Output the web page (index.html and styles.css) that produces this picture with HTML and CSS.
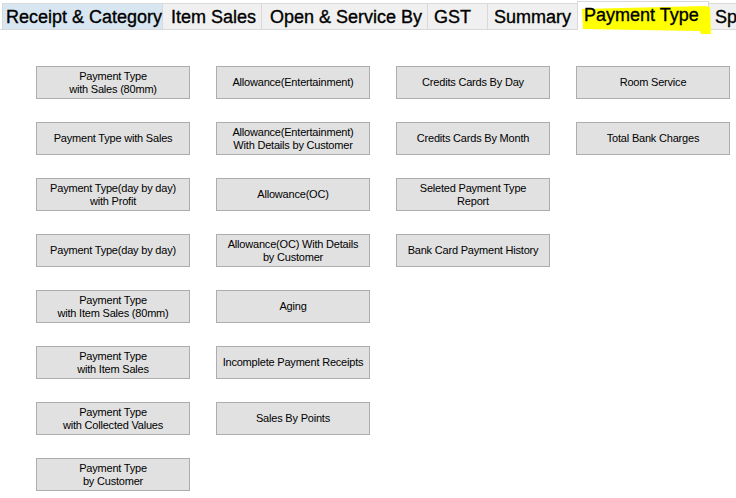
FILE: index.html
```html
<!DOCTYPE html>
<html lang="en">
<head>
  <meta charset="UTF-8">
  <meta name="viewport" content="width=device-width, initial-scale=1.0">
  <title>Reports - Payment Type</title>
  <link rel="stylesheet" href="styles.css">
</head>
<body>

  <nav class="tabs">
    <a class="tab hover">Receipt &amp; Category</a>
    <a class="tab">Item Sales</a>
    <a class="tab">Open &amp; Service By</a>
    <a class="tab">GST</a>
    <a class="tab">Summary</a>
    <a class="tab active">
      <svg class="marker" width="134" height="34" viewBox="0 0 134 34">
        <path d="M3 6 L126 3 L131 4 L132 31 L122 31 L121 28 L4 26 Z" fill="#ffff00"/>
      </svg>
      <span class="label">Payment Type</span>
    </a>
    <a class="tab">Sp</a>
  </nav>

  <div class="panel">
    <div class="col">
      <button>Payment Type<br>with Sales (80mm)</button>
      <button>Payment Type with Sales</button>
      <button>Payment Type(day by day)<br>with Profit</button>
      <button>Payment Type(day by day)</button>
      <button>Payment Type<br>with Item Sales (80mm)</button>
      <button>Payment Type<br>with Item Sales</button>
      <button>Payment Type<br>with Collected Values</button>
      <button>Payment Type<br>by Customer</button>
    </div>
    <div class="col">
      <button>Allowance(Entertainment)</button>
      <button>Allowance(Entertainment)<br>With Details by Customer</button>
      <button>Allowance(OC)</button>
      <button>Allowance(OC) With Details<br>by Customer</button>
      <button>Aging</button>
      <button>Incomplete Payment Receipts</button>
      <button>Sales By Points</button>
    </div>
    <div class="col">
      <button>Credits Cards By Day</button>
      <button>Credits Cards By Month</button>
      <button>Seleted Payment Type<br>Report</button>
      <button>Bank Card Payment History</button>
    </div>
    <div class="col">
      <button>Room Service</button>
      <button>Total Bank Charges</button>
    </div>
  </div>

</body>
</html>
```

FILE: styles.css
```css
* {
  margin: 0;
  padding: 0;
  box-sizing: border-box;
}

body {
  font-family: "Liberation Sans", Arial, sans-serif;
  background: #fff;
  color: #000;
  width: 736px;
  height: 498px;
  overflow: hidden;
}

.tabs {
  display: flex;
  align-items: flex-end;
  height: 30px;
  padding-left: 2px;
  border-bottom: 1px solid #d9d9d9;
  background: #fff;
  white-space: nowrap;
}

.tab {
  display: block;
  height: 26px;
  padding: 2px 0 0 6px;
  font-size: 18px;
  line-height: 22px;
  -webkit-text-stroke: 0.35px #000;
  background: #f0f0f0;
  border: 1px solid #d9d9d9;
  border-bottom: none;
  border-left: none;
  flex-shrink: 0;
}

.tab:nth-child(1) { width: 161px; padding-left: 3px; border-left: 1px solid #d9d9d9; }
.tab:nth-child(2) { width: 99px; padding-left: 8px; }
.tab:nth-child(3) { width: 166px; padding-left: 8px; }
.tab:nth-child(4) { width: 60px; }
.tab:nth-child(5) { width: 90px; }
.tab:nth-child(6) { width: 131px; }
.tab:nth-child(7) { flex: 1; }

.tab.hover {
  background: #d8e6f2;
}

.tab.active {
  position: relative;
  height: 29px;
  margin-bottom: -1px;
  margin-left: -1px;
  width: 132px;
  background: #fff;
  border-left: 1px solid #d9d9d9;
  padding-top: 2px;
}

.marker {
  position: absolute;
  left: 1px;
  top: 1px;
}

.label {
  position: relative;
}

.panel {
  display: grid;
  grid-template-columns: repeat(4, 154px);
  column-gap: 26px;
  padding: 36px 0 0 36px;
  align-items: start;
}

.col {
  display: flex;
  flex-direction: column;
  gap: 23px;
}

button {
  height: 33px;
  background: #e1e1e1;
  border: 1px solid #adadad;
  font-family: "Liberation Sans", Arial, sans-serif;
  font-size: 11px;
  letter-spacing: -0.2px;
  line-height: 13px;
  color: #000;
  text-align: center;
}
```
